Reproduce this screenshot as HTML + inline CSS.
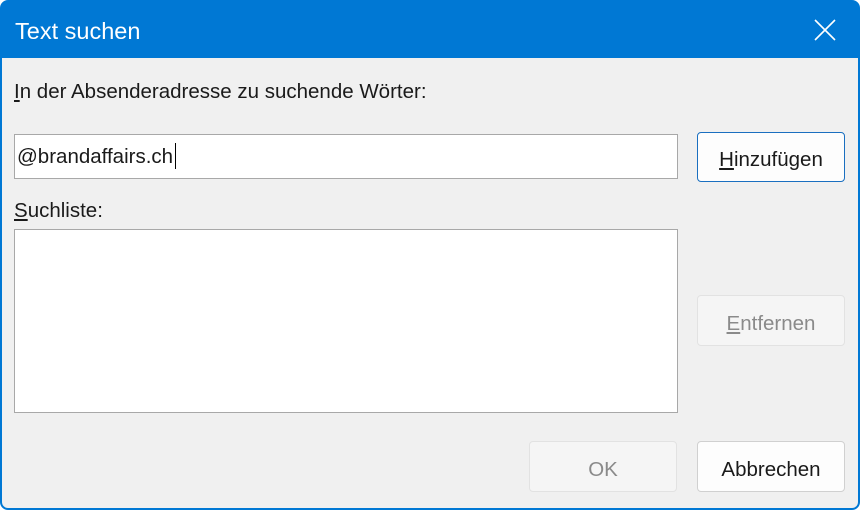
<!DOCTYPE html>
<html><head><meta charset="utf-8"><style>
*{margin:0;padding:0;box-sizing:border-box}
body{width:860px;height:510px;background:#fff;font-family:"Liberation Sans",sans-serif;position:relative;overflow:hidden}
.win{position:absolute;left:0;top:0;width:860px;height:510px;background:#0078d4;border-radius:8px 8px 8px 8px}
.body{position:absolute;left:2px;top:58px;width:856px;height:450px;background:#f0f0f0;border-radius:0 0 6px 6px}
.t{position:absolute;color:#1a1a1a;font-size:20.5px;white-space:nowrap}
.box{position:absolute;background:#fff;border:1px solid #a8a8a8}
.btn{position:absolute;background:#fdfdfd;border:1px solid #d0d0d0;border-radius:4px;font-size:20.5px;text-align:center;color:#1a1a1a;padding-top:2px}
.dis{background:#f5f5f5;border-color:#e2e2e2;color:#8a8a8a}
u{text-decoration:underline;text-underline-offset:2px}
</style></head><body>
<div class="win">
<div class="t" style="left:15px;top:18px;color:#fff;font-size:23.5px">Text suchen</div>
<svg style="position:absolute;left:814px;top:19px" width="22" height="22"><path d="M1 1L21 21M21 1L1 21" stroke="#fff" stroke-width="1.6"/></svg>
<div class="body"></div>
</div>
<div class="t" style="left:14px;top:80px"><u>I</u>n der Absenderadresse zu suchende Wörter:</div>
<div class="box" style="left:14px;top:134px;width:664px;height:45px"></div>
<div class="t" style="left:17px;top:145px">@brandaffairs.ch</div>
<div style="position:absolute;left:175px;top:143px;width:1px;height:26px;background:#000"></div>
<div class="btn" style="left:697px;top:132px;width:148px;height:50px;line-height:50px;border-color:#1a6fc0"><u>H</u>inzufügen</div>
<div class="t" style="left:14px;top:199px"><u>S</u>uchliste:</div>
<div class="box" style="left:14px;top:229px;width:664px;height:184px"></div>
<div class="btn dis" style="left:697px;top:295px;width:148px;height:51px;line-height:51px"><u>E</u>ntfernen</div>
<div class="btn dis" style="left:529px;top:441px;width:148px;height:51px;line-height:51px">OK</div>
<div class="btn" style="left:697px;top:441px;width:148px;height:51px;line-height:51px">Abbrechen</div>
</body></html>
